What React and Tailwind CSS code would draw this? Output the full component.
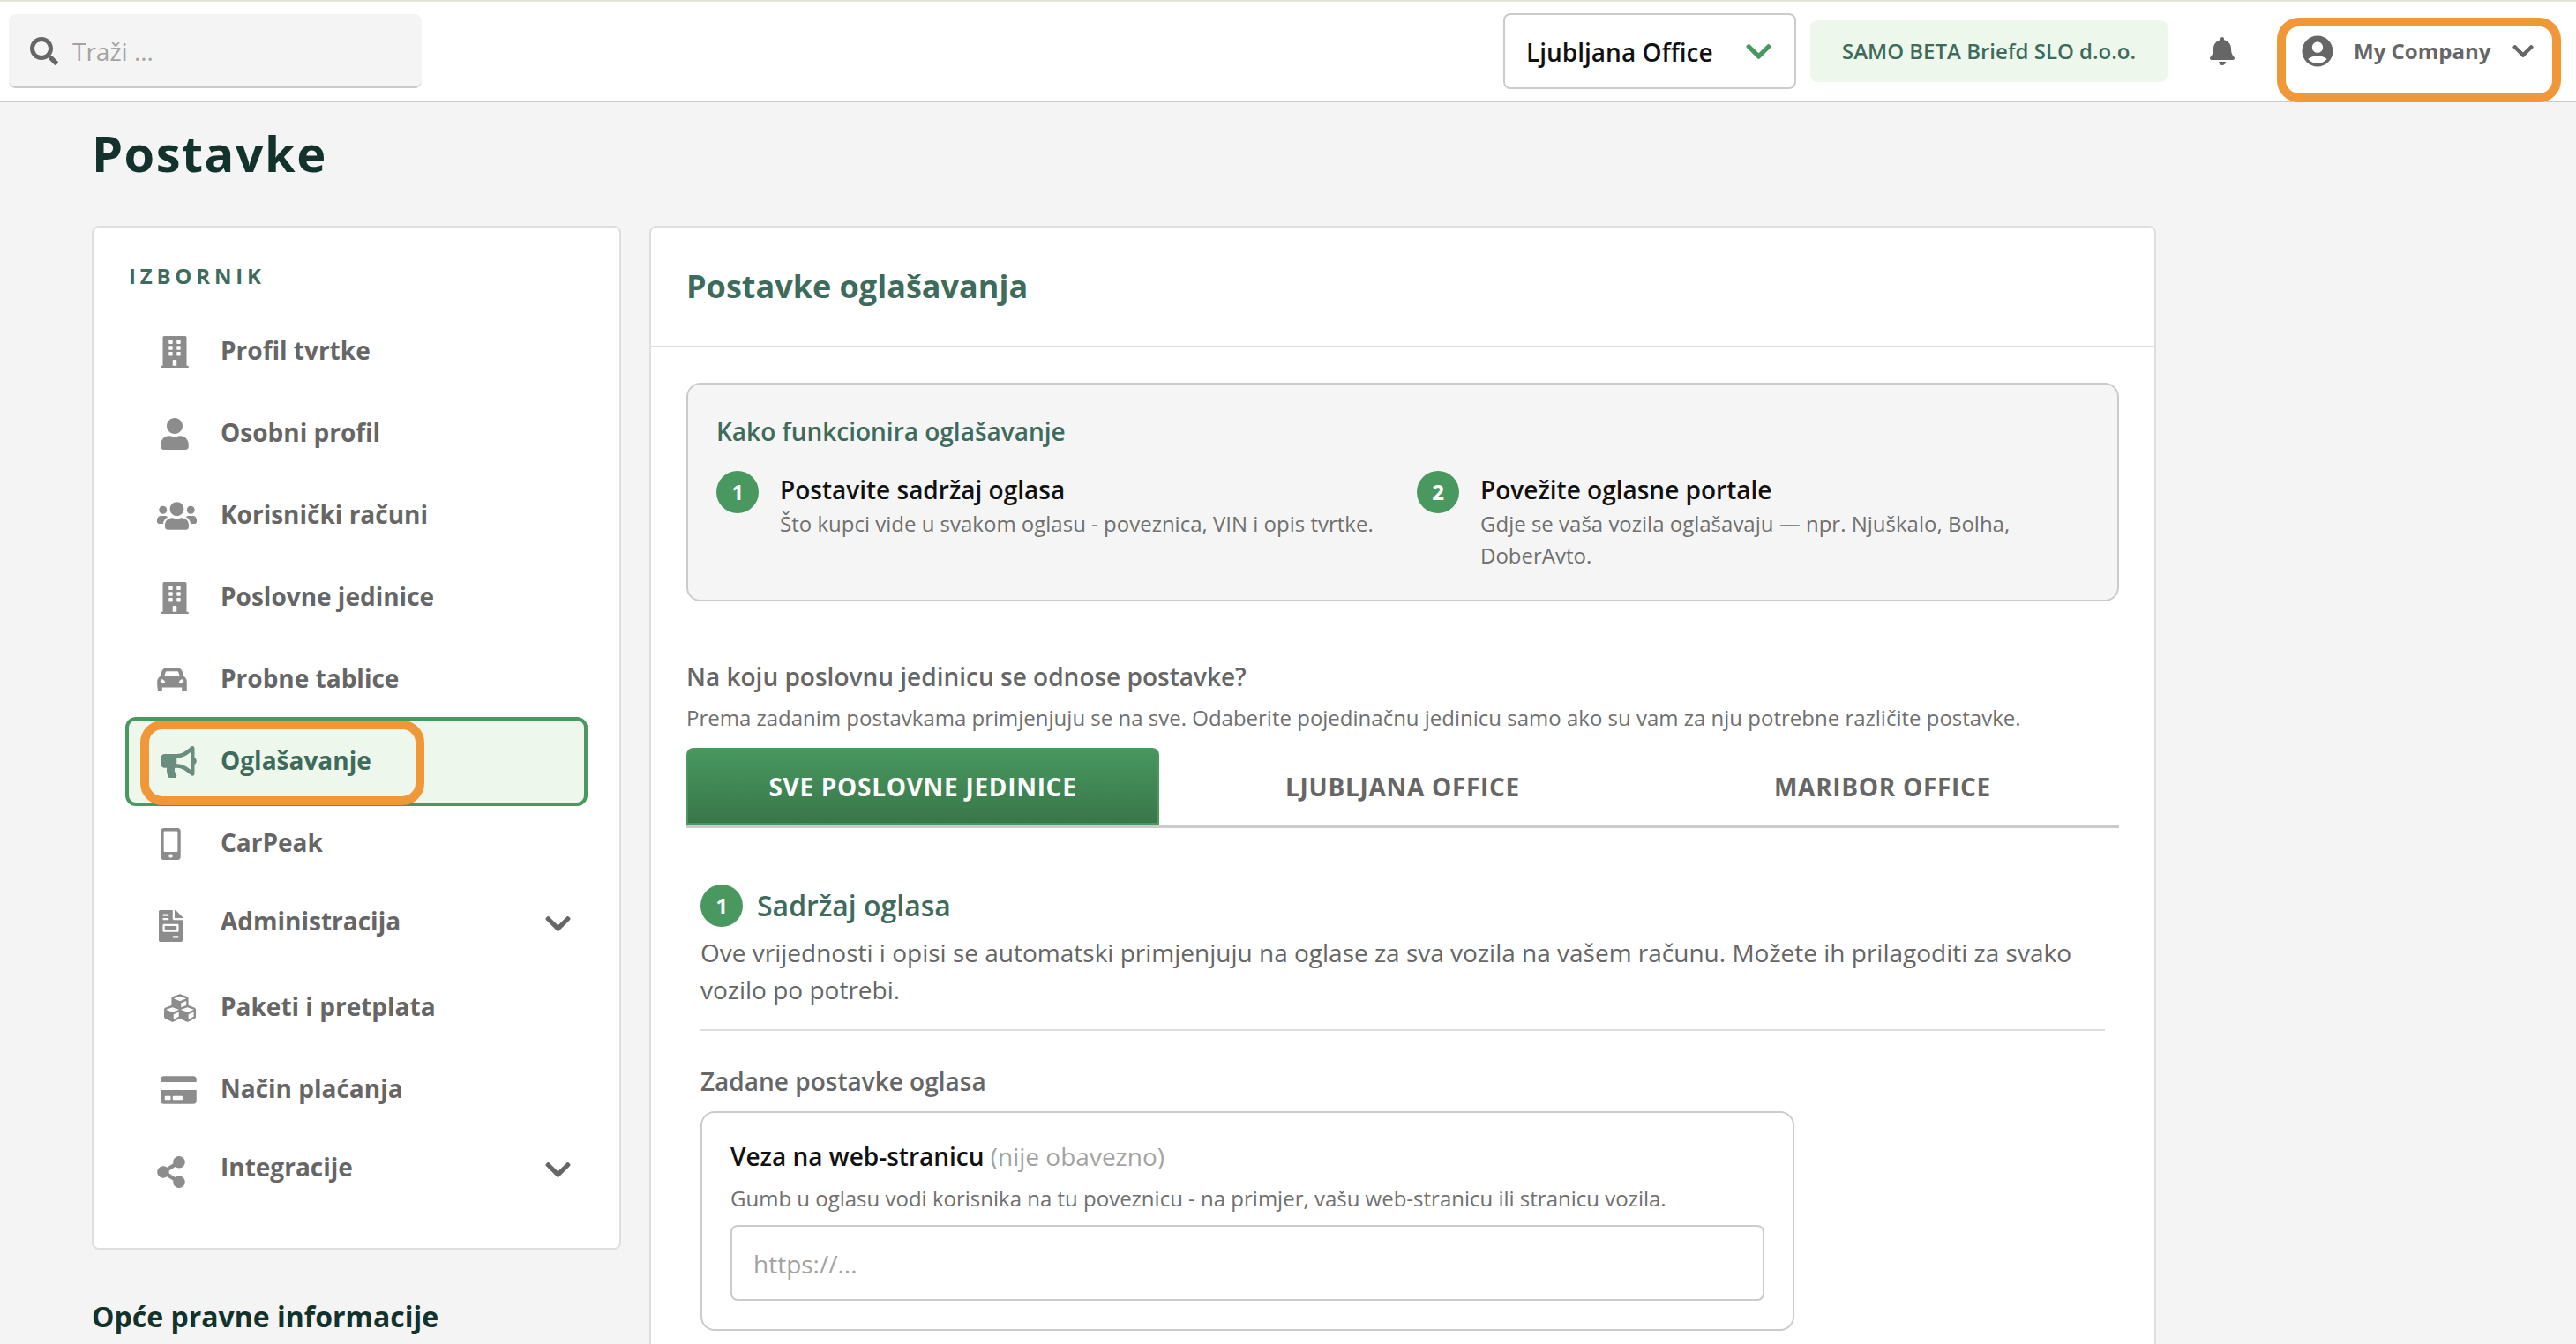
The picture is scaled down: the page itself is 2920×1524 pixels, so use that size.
import React from 'react';
import {
  FaBell,
  FaBuilding,
  FaBullhorn,
  FaChevronDown,
  FaCreditCard,
  FaCubes,
  FaFileInvoice,
  FaMobileAlt,
  FaSearch,
  FaShareAlt,
  FaUser,
  FaUsers,
} from 'react-icons/fa';
import { MdAccountCircle } from 'react-icons/md';

// Front view of a car, rounder than the stock icon
function CarIcon({ className }) {
  return (
    <svg viewBox="0 0 102 82" fill="currentColor" fillRule="evenodd" className={className}>
      <path d="M36 0h30c11 0 17 5 20 13l6 17c6 4 10 10 10 18v27c0 5-3 7-7 7h-4c-4 0-6-3-6-7v-7H17v7c0 4-2 7-6 7H7c-4 0-5-2-5-7l-2-12V48c0-8 4-14 10-18l6-17C19 5 25 0 36 0zM36 13c-5 0-7 1-8 5l-4 12h54l-4-12c-1-4-3-5-8-5zM11 47c0 5 4 8 9 8 4 0 7-1 7-4 0-5-6-11-10-11s-6 3-6 7zM91 47c0-4-2-7-6-7s-10 6-10 11c0 3 3 4 7 4 5 0 9-3 9-8z" />
    </svg>
  );
}

const menuItems = [
  { label: 'Profil tvrtke', icon: FaBuilding, iconClass: 'ml-[40px] h-[36px] w-[32px]' },
  { label: 'Osobni profil', icon: FaUser, iconClass: 'ml-[40px] h-[36px] w-[32px]' },
  { label: 'Korisnički računi', icon: FaUsers, iconClass: 'ml-[36px] h-[36px] w-[45px]' },
  { label: 'Poslovne jedinice', icon: FaBuilding, iconClass: 'ml-[40px] h-[36px] w-[32px]' },
  { label: 'Probne tablice', icon: CarIcon, iconClass: 'ml-[36px] h-[27px] w-[34px]' },
  { label: 'Oglašavanje', icon: FaBullhorn, iconClass: 'ml-[40px] h-[36px] w-[41px]', active: true },
  { label: 'CarPeak', icon: FaMobileAlt, iconClass: 'ml-[40px] h-[36px] w-[23px]' },
  { label: 'Administracija', icon: FaFileInvoice, iconClass: 'ml-[38px] h-[36px] w-[27px]', expandable: true },
  { label: 'Paketi i pretplata', icon: FaCubes, iconClass: 'ml-[44px] h-[36px] w-[36px]' },
  { label: 'Način plaćanja', icon: FaCreditCard, iconClass: 'ml-[40px] h-[36px] w-[41px]' },
  { label: 'Integracije', icon: FaShareAlt, iconClass: 'ml-[36px] h-[36px] w-[32px]', expandable: true },
];

const tabs = ['Sve poslovne jedinice', 'Ljubljana Office', 'Maribor Office'];

function Highlight({ className }) {
  return (
    <div className={`pointer-events-none absolute rounded-[25px] border-[10px] border-[#f09837] ${className}`} />
  );
}

function StepNumber({ children }) {
  return (
    <span className="flex h-12 w-12 shrink-0 items-center justify-center rounded-full bg-[#48985f] text-2xl leading-9 font-bold text-white">
      {children}
    </span>
  );
}

function Header() {
  return (
    <header className="flex h-[116px] items-center border-t-2 border-b-2 border-t-[#e1e4d6] border-b-[#cbcbcb] bg-white pr-12 pl-[10px]">
      <div className="flex h-[84px] w-[468px] items-center gap-4 rounded-lg border-b-2 border-[#cbcbcb] bg-[#f4f4f4] pt-0.5 pl-6">
        <FaSearch className="h-8 w-8 text-[#666]" />
        <span className="text-[28px] leading-[42px] text-[#a3a3a3]">Traži ...</span>
      </div>

      <div className="ml-auto flex h-[86px] w-[332px] items-center justify-between rounded-lg border-2 border-[#cbcbcb] bg-white pr-[26px] pl-[24px]">
        <span className="pt-0.5 text-[28px] leading-[42px] font-semibold text-[#111]">Ljubljana Office</span>
        <FaChevronDown className="h-[33px] w-[29px] text-[#48985f]" />
      </div>

      <div className="ml-4 flex h-[70px] w-[405px] items-center justify-center rounded-lg bg-[#edf7ec] text-2xl leading-9 font-semibold text-[#3e6b5b]">
        SAMO BETA Briefd SLO d.o.o.
      </div>

      <FaBell className="ml-12 h-8 w-7 text-[#666]" />

      <div className="relative ml-[72px] flex h-[70px] w-[267px] items-center text-[#666]">
        <MdAccountCircle className="ml-px h-[42px] w-[42px]" />
        <span className="ml-5 text-2xl leading-9 font-bold">My Company</span>
        <FaChevronDown className="ml-auto h-[28px] w-[24px]" />
        <Highlight className="top-[-3px] left-[-24px] h-[96px] w-[322px]" />
      </div>
    </header>
  );
}

function MenuItem({ item }) {
  const Icon = item.icon;
  return (
    <li
      className={`relative -mb-2 flex h-[101px] items-center rounded-xl border-4 ${
        item.active ? 'border-[#48985f] bg-[#edf7ec] text-[#3e6b5b]' : 'border-transparent text-[#666]'
      }`}
    >
      <span className="-ml-1 w-[108px] shrink-0">
        <Icon className={`opacity-75 ${item.iconClass}`} />
      </span>
      <span className={`text-[28px] leading-[42px] font-bold ${item.expandable ? 'pb-[11px]' : 'pb-[3px]'}`}>
        {item.label}
      </span>
      {item.expandable && <FaChevronDown className="mr-[15px] mb-[5px] ml-auto h-[33px] w-[29px]" />}
      {item.active && <Highlight className="top-0 left-[13px] h-[96px] w-[322px]" />}
    </li>
  );
}

function Sidebar() {
  return (
    <aside className="w-[600px] shrink-0">
      <div className="h-[1161px] rounded-lg border-2 border-[#dedede] bg-white px-9 pt-[37px]">
        <h2 className="pl-1 text-2xl leading-9 font-bold tracking-[4.8px] text-[#3e6b5b] uppercase">Izbornik</h2>
        <ul className="mt-[17px]">
          {menuItems.map((item) => (
            <MenuItem key={item.label} item={item} />
          ))}
        </ul>
      </div>
      <h2 className="mt-[52px] text-[32px] leading-[48px] font-bold whitespace-nowrap text-[#12322b]">
        Opće pravne informacije
      </h2>
    </aside>
  );
}

function Step({ number, title, children }) {
  return (
    <div className="flex gap-6">
      <StepNumber>{number}</StepNumber>
      <div>
        <h4 className="text-[28px] leading-[42px] font-semibold text-[#111]">{title}</h4>
        <p className="text-2xl leading-9 text-[#707070]">{children}</p>
      </div>
    </div>
  );
}

export default function App() {
  return (
    <div className="h-screen overflow-hidden bg-[#f4f4f4] font-['Open_Sans',sans-serif]">
      <Header />
      <main className="px-[104px] pt-[15px]">
        <h1 className="text-[56px] leading-[84px] font-bold tracking-wide text-[#12322b]">Postavke</h1>

        <div className="mt-[41px] flex gap-8">
          <Sidebar />

          <section className="h-[1400px] w-[1708px] shrink-0 rounded-lg border-2 border-[#dedede] bg-white">
            <div className="h-[136px] border-b-2 border-[#dedede] px-10 pt-10">
              <h2 className="text-4xl leading-[54px] font-bold text-[#3e6b5b]">Postavke oglašavanja</h2>
            </div>

            <div className="px-10 pt-10">
              {/* How it works */}
              <div className="rounded-2xl border-2 border-[#cbcbcb] bg-[#f5f5f5] p-8">
                <h3 className="text-[28px] leading-[42px] font-semibold text-[#3e6b5b]">
                  Kako funkcionira oglašavanje
                </h3>
                <div className="mt-6 grid grid-cols-2 gap-8">
                  <Step number={1} title="Postavite sadržaj oglasa">
                    Što kupci vide u svakom oglasu - poveznica, VIN i opis tvrtke.
                  </Step>
                  <Step number={2} title="Povežite oglasne portale">
                    Gdje se vaša vozila oglašavaju — npr. Njuškalo, Bolha, DoberAvto.
                  </Step>
                </div>
              </div>

              {/* Business unit tabs */}
              <h3 className="mt-16 text-[28px] leading-[42px] font-semibold text-[#666]">
                Na koju poslovnu jedinicu se odnose postavke?
              </h3>
              <p className="mt-2 text-2xl leading-9 text-[#707070]">
                Prema zadanim postavkama primjenjuju se na sve. Odaberite pojedinačnu jedinicu samo ako su vam za nju
                potrebne različite postavke.
              </p>
              <div className="mt-4 grid grid-cols-3 gap-2 border-b-4 border-[#cbcbcb]">
                {tabs.map((tab, idx) => (
                  <div
                    key={tab}
                    className={`flex h-[87px] items-center justify-center rounded-t-lg border-2 text-[28px] leading-[42px] font-bold tracking-wide uppercase ${
                      idx === 0
                        ? 'border-[#48985f] bg-linear-to-b from-[#48985f] to-[#3a764a] text-white'
                        : 'border-transparent text-[#666]'
                    }`}
                  >
                    {tab}
                  </div>
                ))}
              </div>

              {/* Ad content */}
              <div className="px-4 pt-16">
                <div className="flex items-center gap-4">
                  <StepNumber>1</StepNumber>
                  <h3 className="text-[32px] leading-[48px] font-semibold text-[#3e6b5b]">Sadržaj oglasa</h3>
                </div>
                <p className="mt-2 border-b-2 border-[#dedede] pb-6 text-[28px] leading-[42px] text-[#666]">
                  Ove vrijednosti i opisi se automatski primjenjuju na oglase za sva vozila na vašem računu. Možete ih
                  prilagoditi za svako vozilo po potrebi.
                </p>

                <h4 className="mt-9 text-[28px] leading-[42px] font-semibold text-[#666]">Zadane postavke oglasa</h4>
                <div className="mt-[13px] h-[249px] w-[1240px] rounded-2xl border-2 border-[#cbcbcb] px-8 pt-7">
                  <label className="block text-[28px] leading-[42px] font-semibold text-[#111]">
                    Veza na web-stranicu <span className="font-normal text-[#a3a3a3]">(nije obavezno)</span>
                  </label>
                  <p className="mt-[9px] text-2xl leading-9 text-[#707070]">
                    Gumb u oglasu vodi korisnika na tu poveznicu - na primjer, vašu web-stranicu ili stranicu vozila.
                  </p>
                  <div className="mt-3 flex h-[86px] items-center rounded-lg border-2 border-[#cbcbcb] px-6 pt-0.5 text-[28px] leading-[42px] text-[#a3a3a3]">
                    https://...
                  </div>
                </div>
              </div>
            </div>
          </section>
        </div>
      </main>
    </div>
  );
}
